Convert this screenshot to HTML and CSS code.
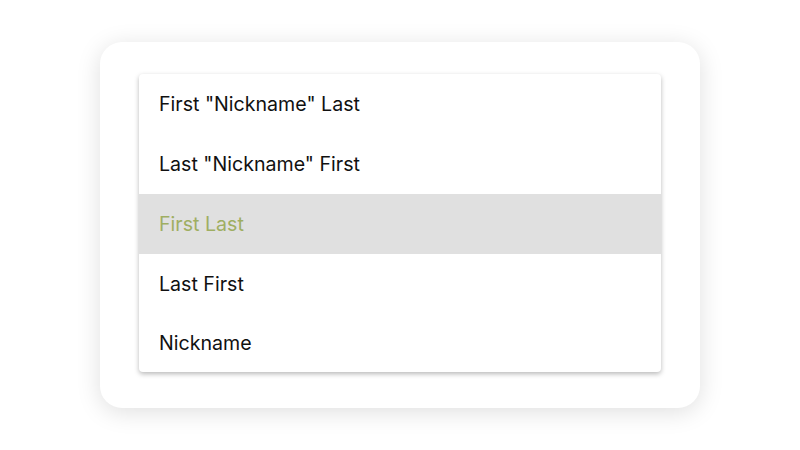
FILE: index.html
```html
<!DOCTYPE html>
<html>
<head>
<meta charset="utf-8">
<link rel="stylesheet" href="styles.css">
</head>
<body>
<div class="stage">
  <div class="card">
    <ul class="menu">
      <li class="item">First "Nickname" Last</li>
      <li class="item">Last "Nickname" First</li>
      <li class="item selected">First Last</li>
      <li class="item">Last First</li>
      <li class="item">Nickname</li>
    </ul>
  </div>
</div>
</body>
</html>
```
FILE: styles.css
```css
html, body {
  margin: 0;
  padding: 0;
  background: #ffffff;
}
body {
  font-family: Inter, "Noto Sans", sans-serif;
  width: 800px;
  height: 450px;
  overflow: hidden;
}
.stage {
  padding-top: 42px;
  padding-left: 100px;
}
.card {
  width: 600px;
  height: 366px;
  box-sizing: border-box;
  padding: 32px 39px;
  background: #ffffff;
  border-radius: 22px;
  box-shadow: 0 4px 24px rgba(0, 0, 0, 0.13);
}
.menu {
  list-style: none;
  margin: 0;
  padding: 0;
  background: #ffffff;
  border-radius: 4px;
  box-shadow: 0 2px 5px rgba(0, 0, 0, 0.28);
  overflow: hidden;
}
.item {
  height: 60px;
  display: flex;
  align-items: center;
  padding-left: 20px;
  font-size: 19.6px;
  color: #111111;
}
.item:last-child {
  height: 58px;
}
.item.selected {
  background: #e0e0e0;
  color: #9fae62;
}
```
